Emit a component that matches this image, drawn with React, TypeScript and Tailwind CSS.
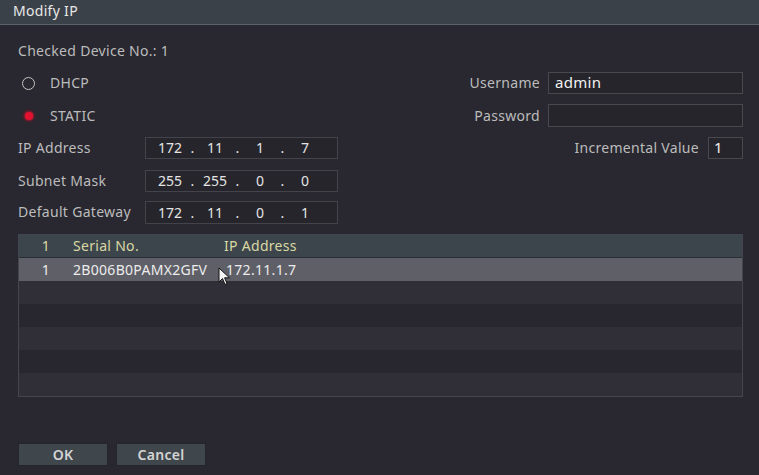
import React from 'react';

const rows = [
  { no: '1', serial: '2B006B0PAMX2GFV', ip: '172.11.1.7' },
];

function IpBox({ parts }: { parts: string[] }) {
  return (
    <div className="flex items-center h-full w-[193px] border border-[#43434b] bg-[#26252c] pl-[6px] pb-[1px] text-[#e4e4e4] tracking-normal">
      {parts.map((p, i) => (
        <React.Fragment key={i}>
          <span className="w-[36px] text-center">{p}</span>
          {i < 3 && <span className="w-[9px] text-center">.</span>}
        </React.Fragment>
      ))}
    </div>
  );
}

function Radio({ checked, label }: { checked?: boolean; label: string }) {
  return (
    <div className="flex items-center gap-[15px] pl-[4px]">
      {checked ? (
        <span className="w-[13px] h-[13px] rounded-full bg-[#3a2028] flex items-center justify-center">
          <span className="w-[8px] h-[8px] rounded-full bg-[#e0122f] shadow-[0_0_3px_#ff2040]" />
        </span>
      ) : (
        <span className="w-[13px] h-[13px] rounded-full border-[1.5px] border-[#c4c4c4]" />
      )}
      <span className="pb-[1px]">{label}</span>
    </div>
  );
}

export default function App() {
  return (
    <div
      className="w-[759px] h-[475px] bg-[#292830] text-[#bcbcbc] text-[14px] tracking-[0.3px] flex flex-col relative overflow-hidden"
      style={{ fontFamily: '"Noto Sans", "DejaVu Sans", sans-serif' }}
    >
      {/* Title */}
      <div className="h-[25px] bg-[#3b4149] border-b border-[#5b626a] flex items-center pl-[13px] pb-[3px] text-[#e8e8e8]">
        Modify IP
      </div>

      <div className="pl-[18px] pr-[16px] flex flex-col">
        <div className="h-[20px] mt-[15px] flex items-center">Checked Device No.: 1</div>

        <div className="h-[22px] mt-[12px] flex items-center justify-between">
          <Radio label="DHCP" />
          <div className="flex items-center h-full">
            <span className="mr-[8px] pb-[1px]">Username</span>
            <div className="h-full w-[195px] border border-[#48484f] bg-[#26252c] pl-[6px] pb-[1px] flex items-center text-[#f2f2f2] text-[15px]">
              admin
            </div>
          </div>
        </div>

        <div className="h-[23px] mt-[10px] flex items-center justify-between">
          <Radio checked label="STATIC" />
          <div className="flex items-center h-full">
            <span className="mr-[8px] pb-[1px]">Password</span>
            <div className="h-full w-[195px] border border-[#48484f] bg-[#26252c]" />
          </div>
        </div>

        <div className="h-[22px] mt-[10px] flex items-center justify-between">
          <div className="flex items-center h-full">
            <span className="w-[127px] pb-[2px]">IP Address</span>
            <IpBox parts={['172', '11', '1', '7']} />
          </div>
          <div className="flex items-center h-full">
            <span className="mr-[9px] pb-[1px]">Incremental Value</span>
            <div className="h-full w-[35px] border border-[#48484f] bg-[#26252c] pl-[5px] pb-[1px] flex items-center text-[#f2f2f2] text-[15px]">
              1
            </div>
          </div>
        </div>

        <div className="h-[22px] mt-[11px] flex items-center">
          <span className="w-[127px] pb-[2px]">Subnet Mask</span>
          <IpBox parts={['255', '255', '0', '0']} />
        </div>

        <div className="h-[23px] mt-[9px] flex items-center">
          <span className="w-[127px] pb-[2px] whitespace-nowrap">Default Gateway</span>
          <IpBox parts={['172', '11', '0', '1']} />
        </div>

        {/* Device table */}
        <div className="mt-[10px] w-[725px] border border-[#44464d] flex flex-col">
          <div className="h-[23px] bg-[#3d454c] border-b border-[#2a2d33] flex items-center pb-[1px] text-[#d9d8a4]">
            <span className="w-[54px] text-center">1</span>
            <span className="w-[151px]">Serial No.</span>
            <span>IP Address</span>
          </div>
          {rows.map((r) => (
            <div key={r.no} className="h-[23px] bg-[#5f5f68] flex items-center pb-[1px] text-[#ececec]">
              <span className="w-[54px] text-center">{r.no}</span>
              <span className="w-[153px] whitespace-nowrap">{r.serial}</span>
              <span>{r.ip}</span>
            </div>
          ))}
          {[0, 1, 2, 3, 4].map((i) => (
            <div key={i} className={`h-[23px] ${i % 2 === 0 ? 'bg-[#302f38]' : 'bg-[#28272f]'}`} />
          ))}
        </div>

        <div className="mt-[46px] flex gap-[8px]">
          <button className="w-[90px] h-[23px] bg-[#3f474d] border border-[#23272b] text-[#d4d4d4] font-semibold">
            OK
          </button>
          <button className="w-[90px] h-[23px] bg-[#3f474d] border border-[#23272b] text-[#d4d4d4] font-semibold">
            Cancel
          </button>
        </div>
      </div>

      {/* mouse pointer */}
      <svg className="absolute left-[218px] top-[267px]" width="13" height="19" viewBox="0 0 13 19">
        <path d="M1 1 L1 15 L4.5 11.5 L7 17.5 L9 16.6 L6.6 10.8 L11.5 10.8 Z" fill="#f4f4f4" stroke="#111" strokeWidth="1" />
      </svg>
    </div>
  );
}
